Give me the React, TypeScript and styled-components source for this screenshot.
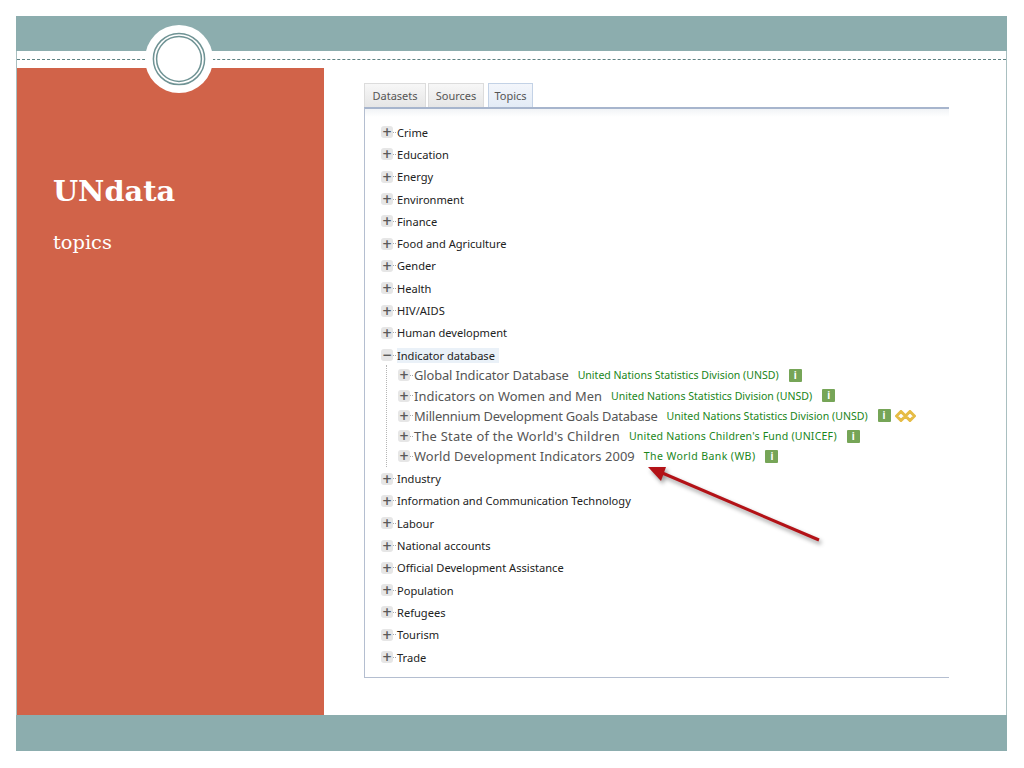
import React from "react";
import styled, { createGlobalStyle } from "styled-components";

const GlobalStyle = createGlobalStyle`
  html, body {
    margin: 0;
    padding: 0;
    background: #fff;
  }
`;

const Slide = styled.div`
  position: relative;
  box-sizing: border-box;
  display: flex;
  flex-direction: column;
  width: 991px;
  height: 735px;
  margin: 16px 0 0 16px;
  border-left: 1px solid #a9bfc0;
  border-right: 1px solid #a9bfc0;
`;

const Band = styled.div<{ $height: number }>`
  flex: none;
  height: ${(props) => props.$height}px;
  margin: 0 -1px;
  background: #8cadae;
`;

const DashedGap = styled.div`
  flex: none;
  display: flex;
  align-items: center;
  height: 17px;

  &::before {
    content: "";
    flex: 1;
    margin-bottom: 1px;
    border-top: 1px dashed #5f8283;
  }
`;

const Ring = styled.div`
  position: absolute;
  top: 9px;
  left: 128px;
  display: flex;
  align-items: center;
  justify-content: center;
  width: 68px;
  height: 68px;
  border-radius: 50%;
  background: #fff;
`;

const Main = styled.div`
  flex: 1;
  display: flex;
  min-height: 0;
`;

const Sidebar = styled.aside`
  flex: none;
  box-sizing: border-box;
  width: 307px;
  padding: 106px 0 0 36px;
  background: #d16349;
  color: #fff;
`;

const Title = styled.h1`
  margin: 0;
  font-family: "DejaVu Serif", serif;
  font-size: 28.8px;
  line-height: 34px;
  font-weight: 700;
`;

const Subtitle = styled.p`
  margin: 22px 0 0;
  font-family: "DejaVu Serif", serif;
  font-size: 19.4px;
  line-height: 26px;
`;

const Content = styled.main`
  flex: 1;
  padding: 15px 0 0 40px;
  font-family: "Noto Sans", Verdana, sans-serif;
`;

const Tabs = styled.div`
  display: flex;
  gap: 2px;
  width: 585px;
  height: 24px;
`;

const Tab = styled.div<{ $active?: boolean; $width: number }>`
  box-sizing: border-box;
  width: ${(props) => props.$width}px;
  margin-left: ${(props) => (props.$active ? 2 : 0)}px;
  padding-top: 4px;
  border: 1px solid ${(props) => (props.$active ? "#c3d2e6" : "#dcdcdc")};
  border-bottom: none;
  background: ${(props) =>
    props.$active
      ? "linear-gradient(#f3f6fb, #e3ebf6)"
      : "linear-gradient(#f7f7f7, #e6e6e6)"};
  color: #555;
  font-size: 11px;
  line-height: 15px;
  text-align: center;
  white-space: nowrap;
`;

const Panel = styled.div`
  box-sizing: border-box;
  width: 585px;
  height: 571px;
  padding-top: 12px;
  border-top: 2px solid #a7b5cd;
  border-left: 1px solid #b4bed0;
  border-bottom: 1px solid #b4bed0;
  background: linear-gradient(#f1f3f6, #fff 8px);
`;

const TreeRow = styled.div`
  display: flex;
  align-items: center;
  height: 22.3px;
  padding-left: 16px;
  color: #222;
  font-size: 11.1px;
  white-space: nowrap;
`;

const Expander = styled.span`
  position: relative;
  flex: none;
  display: flex;
  align-items: center;
  justify-content: center;
  box-sizing: border-box;
  width: 12px;
  height: 12px;
  border-radius: 3px;
  background: #e6e6e6;
  color: #5a5a5a;
  font-family: "DejaVu Sans", sans-serif;
  font-size: 12px;
  font-weight: 700;
  line-height: 12px;

  &::before {
    content: "";
    position: absolute;
    top: -5px;
    bottom: -5px;
    left: 5px;
    z-index: -1;
    border-left: 1px dotted #c4c4c4;
  }
`;

const Connector = styled.span`
  flex: none;
  width: 3px;
  margin-right: 1px;
  border-top: 1px dotted #aaa;
`;

const Label = styled.span<{ $selected?: boolean }>`
  padding-right: ${(props) => (props.$selected ? 4 : 0)}px;
  background: ${(props) => (props.$selected ? "#eaf1f8" : "transparent")};
`;

const SubTree = styled.div`
  margin: -1px 0 1px 21px;
  border-left: 1px dotted #b5b5b5;
`;

const SubRow = styled.div`
  display: flex;
  align-items: center;
  height: 20.25px;
  padding-left: 11px;
  white-space: nowrap;
`;

const DatasetName = styled.span<{ $tracking: number }>`
  color: #555;
  font-size: 12.9px;
  letter-spacing: ${(props) => props.$tracking}px;
`;

const Source = styled.span<{ $tracking: number }>`
  margin-left: 9px;
  color: #1a861a;
  font-size: 10.55px;
  letter-spacing: ${(props) => props.$tracking}px;
`;

const InfoBadge = styled.span`
  flex: none;
  display: flex;
  align-items: center;
  justify-content: center;
  width: 13px;
  height: 13px;
  margin-left: 10px;
  border-radius: 1px;
  background: #76a557;
  color: #fff;
  font-size: 10px;
  font-weight: 700;
  line-height: 13px;
`;

const Arrow = styled.svg`
  position: absolute;
  top: 430px;
  left: 610px;
`;

const ArrowLine = styled.g`
  filter: drop-shadow(2px 3px 2px rgba(0, 0, 0, 0.4));
`;

const GoldLinks = styled.svg`
  flex: none;
  margin-left: 4px;
`;

const topBefore = [
  "Crime",
  "Education",
  "Energy",
  "Environment",
  "Finance",
  "Food and Agriculture",
  "Gender",
  "Health",
  "HIV/AIDS",
  "Human development",
];

const topAfter = [
  "Industry",
  "Information and Communication Technology",
  "Labour",
  "National accounts",
  "Official Development Assistance",
  "Population",
  "Refugees",
  "Tourism",
  "Trade",
];

const UNSD = "United Nations Statistics Division (UNSD)";

const datasets = [
  { name: "Global Indicator Database", source: UNSD, tracking: -0.12, sourceTracking: 0 },
  { name: "Indicators on Women and Men", source: UNSD, tracking: 0.04, sourceTracking: 0 },
  {
    name: "Millennium Development Goals Database",
    source: UNSD,
    tracking: -0.19,
    sourceTracking: 0,
    gold: true,
  },
  {
    name: "The State of the World's Children",
    source: "United Nations Children's Fund (UNICEF)",
    tracking: 0.24,
    sourceTracking: 0.2,
  },
  {
    name: "World Development Indicators 2009",
    source: "The World Bank (WB)",
    tracking: 0.09,
    sourceTracking: 0.4,
  },
];

const Row: React.FC<{ label: string; open?: boolean }> = ({ label, open }) => (
  <TreeRow>
    <Expander>{open ? "−" : "+"}</Expander>
    <Connector />
    <Label $selected={open}>{label}</Label>
  </TreeRow>
);

const App: React.FC = () => (
  <>
    <GlobalStyle />
    <Slide>
      <Band $height={35} />
      <DashedGap />
      <Main>
        <Sidebar>
          <Title>UNdata</Title>
          <Subtitle>topics</Subtitle>
        </Sidebar>
        <Content>
          <Tabs>
            <Tab $width={62}>Datasets</Tab>
            <Tab $width={56}>Sources</Tab>
            <Tab $width={45} $active>
              Topics
            </Tab>
          </Tabs>
          <Panel>
            {topBefore.map((label) => (
              <Row key={label} label={label} />
            ))}
            <Row label="Indicator database" open />
            <SubTree>
              {datasets.map((dataset) => (
                <SubRow key={dataset.name}>
                  <Expander>+</Expander>
                  <Connector />
                  <DatasetName $tracking={dataset.tracking}>{dataset.name}</DatasetName>
                  <Source $tracking={dataset.sourceTracking}>{dataset.source}</Source>
                  <InfoBadge>i</InfoBadge>
                  {dataset.gold && (
                    <GoldLinks width="21" height="12" viewBox="0 0 21 12">
                      <path
                        d="M6 1.5 L10.5 6 L6 10.5 L1.5 6 Z M15 1.5 L19.5 6 L15 10.5 L10.5 6 Z"
                        fill="none"
                        stroke="#e6bc45"
                        strokeWidth="3"
                      />
                    </GoldLinks>
                  )}
                </SubRow>
              ))}
            </SubTree>
            {topAfter.map((label) => (
              <Row key={label} label={label} />
            ))}
          </Panel>
        </Content>
      </Main>
      <Band $height={36} />
      <Ring>
        <svg width="54" height="54" viewBox="0 0 54 54">
          <circle cx="27" cy="27" r="25.6" fill="none" stroke="#6f9394" strokeWidth="1.5" />
          <circle cx="27" cy="27" r="22.4" fill="none" stroke="#6f9394" strokeWidth="1.5" />
        </svg>
      </Ring>
      <Arrow width="200" height="110" viewBox="0 0 200 110">
        <ArrowLine>
          <path d="M192 94 L33 26" fill="none" stroke="#b31217" strokeWidth="3" />
          <path d="M21 21 L39 21 L34 35 Z" fill="#b31217" />
        </ArrowLine>
      </Arrow>
    </Slide>
  </>
);

export default App;
